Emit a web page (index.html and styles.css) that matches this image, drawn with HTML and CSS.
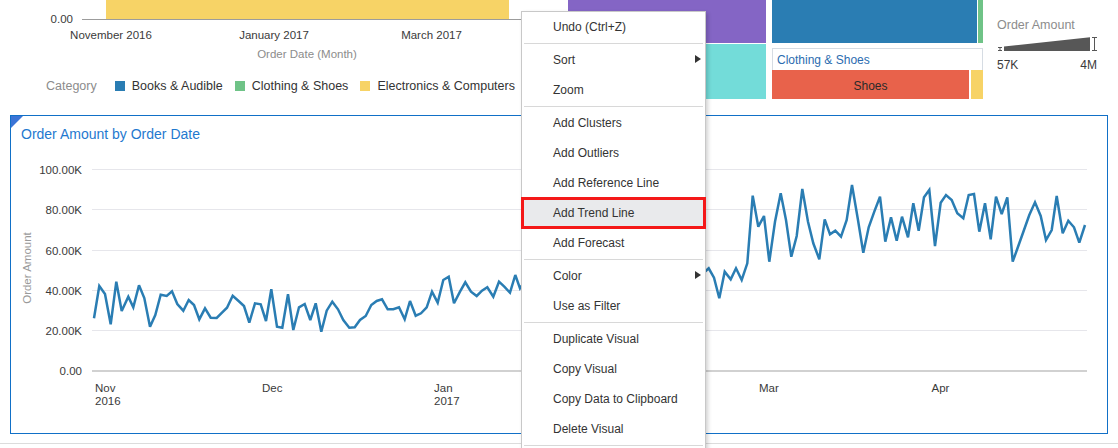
FILE: index.html
```html
<!DOCTYPE html>
<html>
<head>
<meta charset="utf-8">
<title>Order Amount</title>
<link rel="stylesheet" href="styles.css">
</head>
<body>
<div class="page">
  <div class="top">
    <div class="bar-chart">
      <svg class="bar-plot" width="568" height="62" viewBox="0 0 568 62">
        <rect class="bar-yellow" x="106" y="0" width="403" height="19"/>
        <line class="axis-base" x1="82" y1="19.5" x2="568" y2="19.5"/>
        <text class="tick" x="73" y="23" text-anchor="end">0.00</text>
        <text class="tick" x="111" y="39" text-anchor="middle">November 2016</text>
        <text class="tick" x="274" y="39" text-anchor="middle">January 2017</text>
        <text class="tick" x="431.5" y="39" text-anchor="middle">March 2017</text>
        <text class="axis-title" x="307" y="57.5" text-anchor="middle">Order Date (Month)</text>
      </svg>
      <div class="legend">
        <span class="legend-title">Category</span>
        <span class="legend-item"><i class="swatch sw-blue"></i>Books &amp; Audible</span>
        <span class="legend-item"><i class="swatch sw-green"></i>Clothing &amp; Shoes</span>
        <span class="legend-item"><i class="swatch sw-yellow"></i>Electronics &amp; Computers</span>
      </div>
    </div>
    <div class="treemap">
      <div class="tm-col tm-col1">
        <div class="tile purple"></div>
        <div class="tile teal"></div>
      </div>
      <div class="tm-col tm-col2">
        <div class="tm-row tm-row1">
          <div class="tile blue"></div>
          <div class="tile green"></div>
        </div>
        <div class="tm-group-head">Clothing &amp; Shoes</div>
        <div class="tm-row tm-row2">
          <div class="tile red">Shoes</div>
          <div class="tile yellow"></div>
        </div>
      </div>
    </div>
    <div class="size-legend">
      <div class="size-title">Order Amount</div>
      <svg class="size-wedge" width="100" height="16" viewBox="997 35 100 16">
        <path class="ibeam" d="M998 47.5H1002M1000 47.5V50.5M998 50.5H1002"/>
        <polygon class="wedge" points="1004,46.5 1090,37.3 1090,51 1004,51"/>
        <path class="ibeam" d="M1092 37.5H1097M1094.5 37.5V50.5M1092 50.5H1097"/>
      </svg>
      <div class="size-range"><span>57K</span><span>4M</span></div>
    </div>
  </div>

  <section class="panel">
    <span class="panel-corner"></span>
    <div class="panel-title">Order Amount by Order Date</div>
    <svg class="chart" width="1096" height="283" viewBox="11 149 1096 283">
      <g class="grid">
        <line x1="92" x2="1087" y1="169.5" y2="169.5"/>
        <line x1="92" x2="1087" y1="209.5" y2="209.5"/>
        <line x1="92" x2="1087" y1="250.5" y2="250.5"/>
        <line x1="92" x2="1087" y1="290.5" y2="290.5"/>
        <line x1="92" x2="1087" y1="330.5" y2="330.5"/>
      </g>
      <line class="baseline" x1="92" x2="1087" y1="371" y2="371"/>
      <g class="tick">
        <text x="82" y="173.5" text-anchor="end">100.00K</text>
        <text x="82" y="213.5" text-anchor="end">80.00K</text>
        <text x="82" y="254.5" text-anchor="end">60.00K</text>
        <text x="82" y="294.5" text-anchor="end">40.00K</text>
        <text x="82" y="334.5" text-anchor="end">20.00K</text>
        <text x="82" y="375" text-anchor="end">0.00</text>
        <text x="95" y="391.5">Nov</text>
        <text x="95" y="404.5">2016</text>
        <text x="262" y="391.5">Dec</text>
        <text x="434" y="391.5">Jan</text>
        <text x="434" y="404.5">2017</text>
        <text x="759" y="391.5">Mar</text>
        <text x="931.5" y="391.5">Apr</text>
      </g>
      <text class="axis-title y-title" x="27" y="268" text-anchor="middle" dominant-baseline="central" transform="rotate(-90 27 268)">Order Amount</text>
      <polyline class="series" points="94,318.3 99.3,286 105,294 110.7,324.3 116.3,281.7 121.7,311 128.3,296.7 133.3,307.3 139,285.3 144.3,298 150,326.7 155.3,315 160.7,294.7 166.7,296 172,291.3 177.3,304 183.3,310.7 188.7,300 194,305 199.3,319.3 205,308.3 210.7,317.7 216.7,318 222,312.7 227,307.7 232.7,295.7 238.3,300.7 244,306 249.3,322.7 255,303.3 260.7,304.3 266,321 271.3,289.3 277,326.7 282.3,327.7 288,294.3 293.3,330 299,307.3 304.7,304 310.3,320 315.7,303.3 321.3,331.7 326.7,310.7 332.3,301.7 338,309.3 343.3,320 349.3,327.7 354.7,327.3 360,320 365.7,316 371.3,305 376.7,301 382,299.3 387.7,309.3 393.3,309.3 399,307.3 404.7,319.3 410,301 415.7,315.7 421,313.3 426.7,307.3 432,291.7 437.7,302.7 443.3,280 448.7,276.7 454,303.3 460,291.7 465.3,282.3 471,291.7 476.7,296 482,290.7 487.3,287.3 493.3,296.7 499,281.7 504.3,286.7 510,292.7 515.3,275 520,288.3 526,280 531,290 537,283 542,276 548,286 553,279 559,292 564,281 570,274 575,285 581,278 586,288 592,272 597,280 603,284 608,276 614,289 619,279 625,270 630,282 636,276 641,287 647,274 652,281 658,271 663,284 669,277 674,268 680,279 685,273 691,283 696,271 701,275 706,270.7 708.7,268.3 714,277.7 719.3,298.3 724.7,271.7 730.7,279.3 736,268.3 741.7,280 747.3,263.3 752.7,195.7 758.3,226.7 764,216 769.3,261.7 775,221.7 780.7,193.3 786,220 791.3,256.7 796.7,236 802.3,189 808,221.7 813.3,243.3 819.3,259.3 824.7,219.3 830,234.3 835.3,230.7 841,236.7 846.7,220 852,185 857.7,218.3 863.3,252.7 868.7,227.3 874.3,211.7 880,196.7 885.3,241.7 891,217.3 896.7,240.7 902,216.7 908,237.3 913.3,203.3 918.7,230.7 924,197.3 929.3,190 935,246 940.7,202.7 946,195 951.7,200 957.3,213.3 963.3,218.3 968.7,195 974,194 979.3,231.7 985,203.3 990.7,239.3 996,196.7 1001.7,214 1007.3,197.3 1012.7,261.7 1018.3,246 1024,230 1029.3,215 1035,202.3 1040.7,216 1046,240 1051.7,230 1056.7,196 1062.7,233.3 1068.3,220.7 1074,227.3 1079.3,242.7 1085,225"/>
    </svg>
  </section>
  <div class="next-panel"></div>

  <div class="context-menu">
    <div class="menu-item">Undo (Ctrl+Z)</div>
    <div class="menu-sep"></div>
    <div class="menu-item has-sub">Sort</div>
    <div class="menu-item">Zoom</div>
    <div class="menu-sep"></div>
    <div class="menu-item">Add Clusters</div>
    <div class="menu-item">Add Outliers</div>
    <div class="menu-item">Add Reference Line</div>
    <div class="menu-item active">Add Trend Line</div>
    <div class="menu-item">Add Forecast</div>
    <div class="menu-sep"></div>
    <div class="menu-item has-sub">Color</div>
    <div class="menu-item">Use as Filter</div>
    <div class="menu-sep"></div>
    <div class="menu-item">Duplicate Visual</div>
    <div class="menu-item">Copy Visual</div>
    <div class="menu-item">Copy Data to Clipboard</div>
    <div class="menu-item">Delete Visual</div>
    <div class="menu-sep"></div>
  </div>
</div>
</body>
</html>
```

FILE: styles.css
```css
html, body {
  margin: 0;
  height: 448px;
  overflow: hidden;
}
body {
  font-family: "Liberation Sans", Arial, sans-serif;
  color: #333;
  background: #fff;
}
.page {
  position: relative;
  width: 1118px;
  height: 448px;
  overflow: hidden;
}

/* ---------- top strip ---------- */
.top {
  display: flex;
  height: 99px;
}
.bar-chart {
  width: 568px;
  flex: none;
}
.bar-plot {
  display: block;
}
.bar-yellow { fill: #f7d366; }
.axis-base { stroke: #9c9c9c; stroke-width: 1; }
.tick, .tick text {
  font-size: 11.5px;
  fill: #3a3a3a;
}
.axis-title {
  font-size: 11.5px;
  fill: #8c8c8c;
}
.legend {
  display: flex;
  align-items: center;
  margin-top: 17px;
  padding-left: 46px;
  font-size: 12.5px;
  line-height: 14px;
  white-space: nowrap;
}
.legend-title {
  color: #8c8c8c;
  margin-right: 18px;
}
.legend-item {
  display: flex;
  align-items: center;
  margin-right: 12px;
}
.swatch {
  width: 10px;
  height: 10px;
  margin-right: 7px;
}
.sw-blue { background: #2a7db3; }
.sw-green { background: #6fc387; }
.sw-yellow { background: #f7d366; }

.treemap {
  display: flex;
  gap: 6px;
  width: 415px;
  height: 99px;
  flex: none;
}
.tm-col1 {
  width: 198px;
  display: flex;
  flex-direction: column;
  gap: 1px;
}
.tm-col2 {
  width: 211px;
  display: flex;
  flex-direction: column;
}
.purple { height: 43px; background: #8465c5; }
.teal { flex: 1; background: #73dcd9; }
.tm-row { display: flex; }
.tm-row1 { height: 43px; gap: 1px; }
.blue { width: 205px; background: #2a7db3; }
.green { flex: 1; background: #6fc387; }
.tm-group-head {
  margin-top: 5px;
  height: 21px;
  border: 1px solid #d6dce3;
  border-bottom: none;
  padding-left: 4px;
  font-size: 12px;
  line-height: 22px;
  color: #2b6cb0;
}
.tm-row2 { flex: 1; gap: 2px; }
.red {
  width: 197px;
  background: #e8624b;
  display: flex;
  align-items: center;
  justify-content: center;
  padding-top: 2px;
  box-sizing: border-box;
  font-size: 12px;
  color: #2a2a2a;
}
.yellow { flex: 1; background: #f7d366; }

.size-legend {
  margin-left: 14px;
  width: 100px;
  padding-top: 17px;
}
.size-title {
  font-size: 12.5px;
  line-height: 16px;
  color: #8c8c8c;
}
.size-wedge {
  display: block;
  margin-top: 2px;
}
.wedge { fill: #575757; }
.ibeam { stroke: #575757; stroke-width: 1; fill: none; }
.size-range {
  display: flex;
  justify-content: space-between;
  margin-top: 7px;
  font-size: 12px;
  line-height: 14px;
  color: #3a3a3a;
}

/* ---------- panel ---------- */
.panel {
  position: relative;
  margin: 16px 0 0 10px;
  width: 1098px;
  height: 319px;
  box-sizing: border-box;
  border: 1px solid #1170c7;
}
.panel-corner {
  position: absolute;
  top: 0;
  left: 0;
  width: 0;
  height: 0;
  border-top: 12px solid #3b74d6;
  border-right: 12px solid transparent;
}
.panel-title {
  padding: 10px 0 0 10px;
  font-size: 14px;
  line-height: 16px;
  color: #1f79cf;
}
.chart {
  display: block;
  margin-top: 7px;
}
.grid line { stroke: #e6e6eb; stroke-width: 1; }
.baseline { stroke: #a3a3a3; stroke-width: 1; }
.y-title { font-size: 11.5px; fill: #9a9a9a; }
.series {
  fill: none;
  stroke: #2a7db3;
  stroke-width: 2.5;
  stroke-linejoin: miter;
  stroke-miterlimit: 3;
}
.next-panel {
  margin-top: 9px;
  border-top: 1px solid #dcdcdc;
}

/* ---------- context menu ---------- */
.context-menu {
  position: absolute;
  left: 521px;
  top: 11px;
  width: 185px;
  height: 440px;
  box-sizing: border-box;
  background: #fff;
  border: 1px solid #c8c8c8;
  border-bottom: none;
  box-shadow: 2px 2px 4px rgba(0, 0, 0, 0.18);
}
.menu-item {
  position: relative;
  height: 30px;
  line-height: 30px;
  padding-left: 31px;
  font-size: 12px;
  color: #333;
  white-space: nowrap;
}
.menu-sep {
  height: 1px;
  margin: 1px 2px;
  background: #d8d8d8;
}
.has-sub::after {
  content: "";
  position: absolute;
  right: 4px;
  top: 10px;
  border-left: 6px solid #333;
  border-top: 4.5px solid transparent;
  border-bottom: 4.5px solid transparent;
}
.menu-item.active {
  background: #e9eaec;
  outline: 3px solid #f41818;
  outline-offset: -2px;
}
```
